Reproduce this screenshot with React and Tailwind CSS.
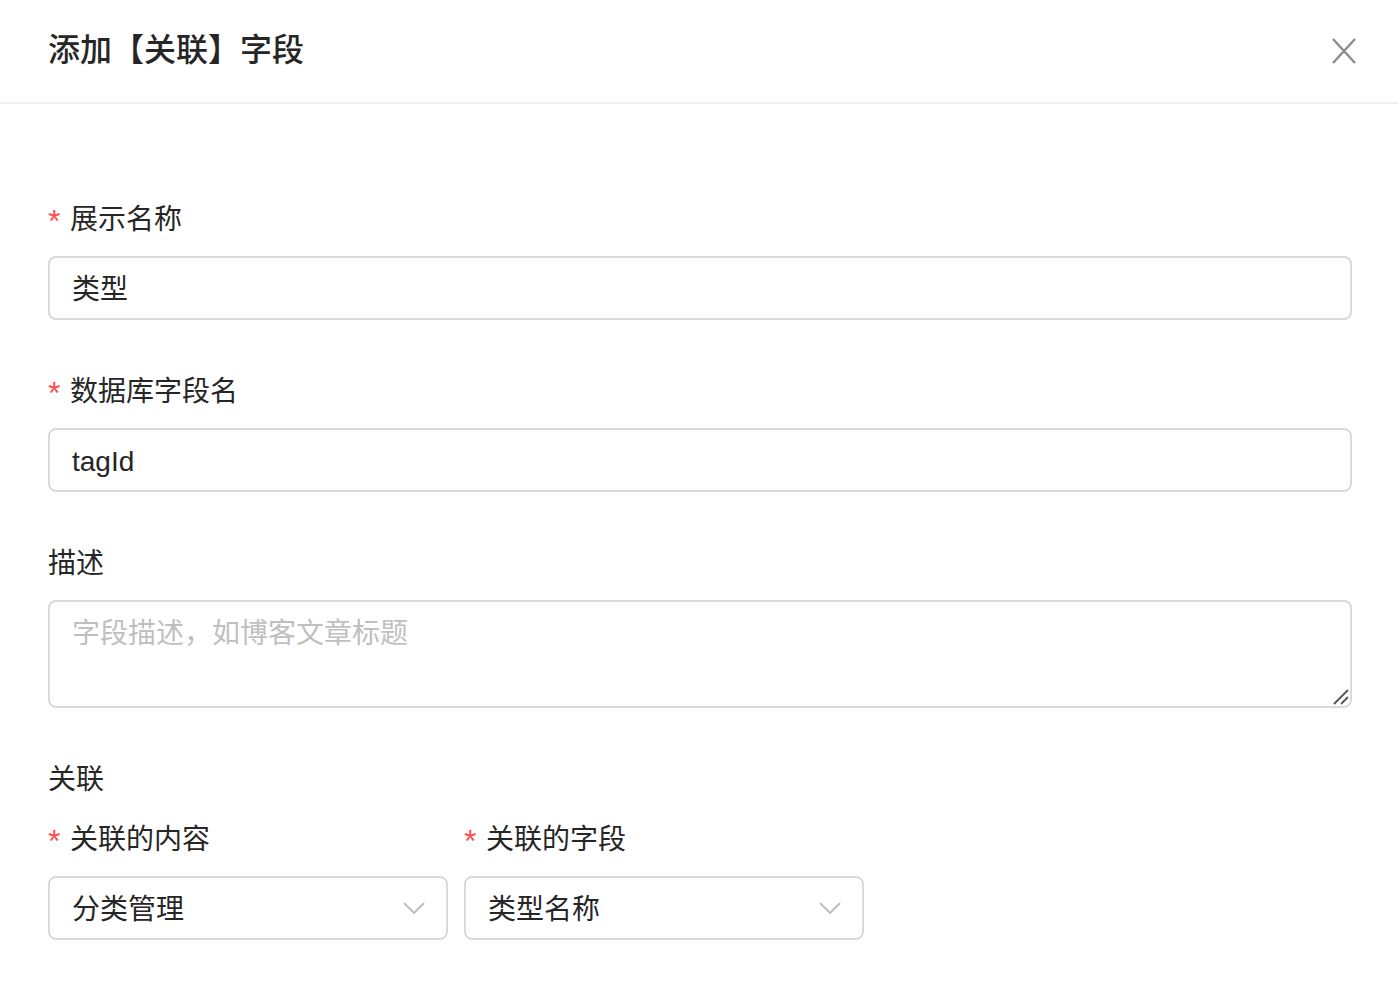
const FONT = { fontFamily: '"Liberation Sans", "Noto Sans CJK SC", sans-serif' };

function Label({ required, children }) {
  return (
    <div className="flex h-[44px] items-center pt-[4px] text-[28px] leading-[40px] text-[#262626]">
      {required && (
        <span className="mr-[8px] mt-[2px] w-[14px] text-[32px] leading-none text-[#ff4d4f]">*</span>
      )}
      <span>{children}</span>
    </div>
  );
}

function TextInput({ value }) {
  return (
    <div className="mt-[16px] flex h-[64px] items-center rounded-[8px] border-2 border-[#d9d9d9] bg-white px-[22px] pt-[4px] text-[28px] text-[#262626]">
      {value}
    </div>
  );
}

function Chevron() {
  return (
    <svg width="22" height="12" viewBox="0 0 22 12" fill="none" stroke="#bfbfbf" strokeWidth="2">
      <path d="M1 1l10 10L21 1" />
    </svg>
  );
}

function Select({ value }) {
  return (
    <div className="mt-[16px] flex h-[64px] items-center justify-between rounded-[8px] border-2 border-[#d9d9d9] bg-white pl-[22px] pr-[21px] text-[28px] text-[#262626]">
      <span className="pt-[4px]">{value}</span>
      <Chevron />
    </div>
  );
}

export default function App() {
  return (
    <div className="min-h-[1000px] w-full bg-white" style={FONT}>
      {/* Header */}
      <div className="flex h-[104px] items-center justify-between border-b-2 border-[#f0f0f0] pl-[48px] pr-[42px]">
        <h1 className="pb-[2px] text-[32px] font-medium text-[#262626]">添加【关联】字段</h1>
        <svg width="24" height="26" viewBox="0 0 24 26" fill="none" stroke="#8c8c8c" strokeWidth="2.4">
          <path d="M1 1l22 24M23 1L1 25" />
        </svg>
      </div>

      {/* Form */}
      <div className="pl-[48px] pr-[46px] pt-[92px]">
        <div className="mb-[48px]">
          <Label required>展示名称</Label>
          <TextInput value="类型" />
        </div>
        <div className="mb-[48px]">
          <Label required>数据库字段名</Label>
          <TextInput value="tagId" />
        </div>
        <div className="mb-[48px]">
          <Label>描述</Label>
          <div className="relative mt-[16px]">
            <textarea
              readOnly
              placeholder="字段描述，如博客文章标题"
              className="block h-[108px] w-full resize-none rounded-[8px] border-2 border-[#d9d9d9] px-[22px] pt-[14px] text-[28px] leading-[36px] text-[#262626] outline-none placeholder:text-[#bfbfbf]"
              style={FONT}
            />
            <svg
              className="pointer-events-none absolute bottom-[3px] right-[3px]"
              width="16"
              height="16"
              viewBox="0 0 16 16"
              fill="none"
              stroke="#555555"
              strokeWidth="1.8"
            >
              <path d="M1 15L15 1M8 15l7-7" />
            </svg>
          </div>
        </div>
        <div className="mb-[16px]">
          <Label>关联</Label>
        </div>
        <div className="flex gap-[16px]">
          <div className="w-[400px]">
            <Label required>关联的内容</Label>
            <Select value="分类管理" />
          </div>
          <div className="w-[400px]">
            <Label required>关联的字段</Label>
            <Select value="类型名称" />
          </div>
        </div>
      </div>
    </div>
  );
}
